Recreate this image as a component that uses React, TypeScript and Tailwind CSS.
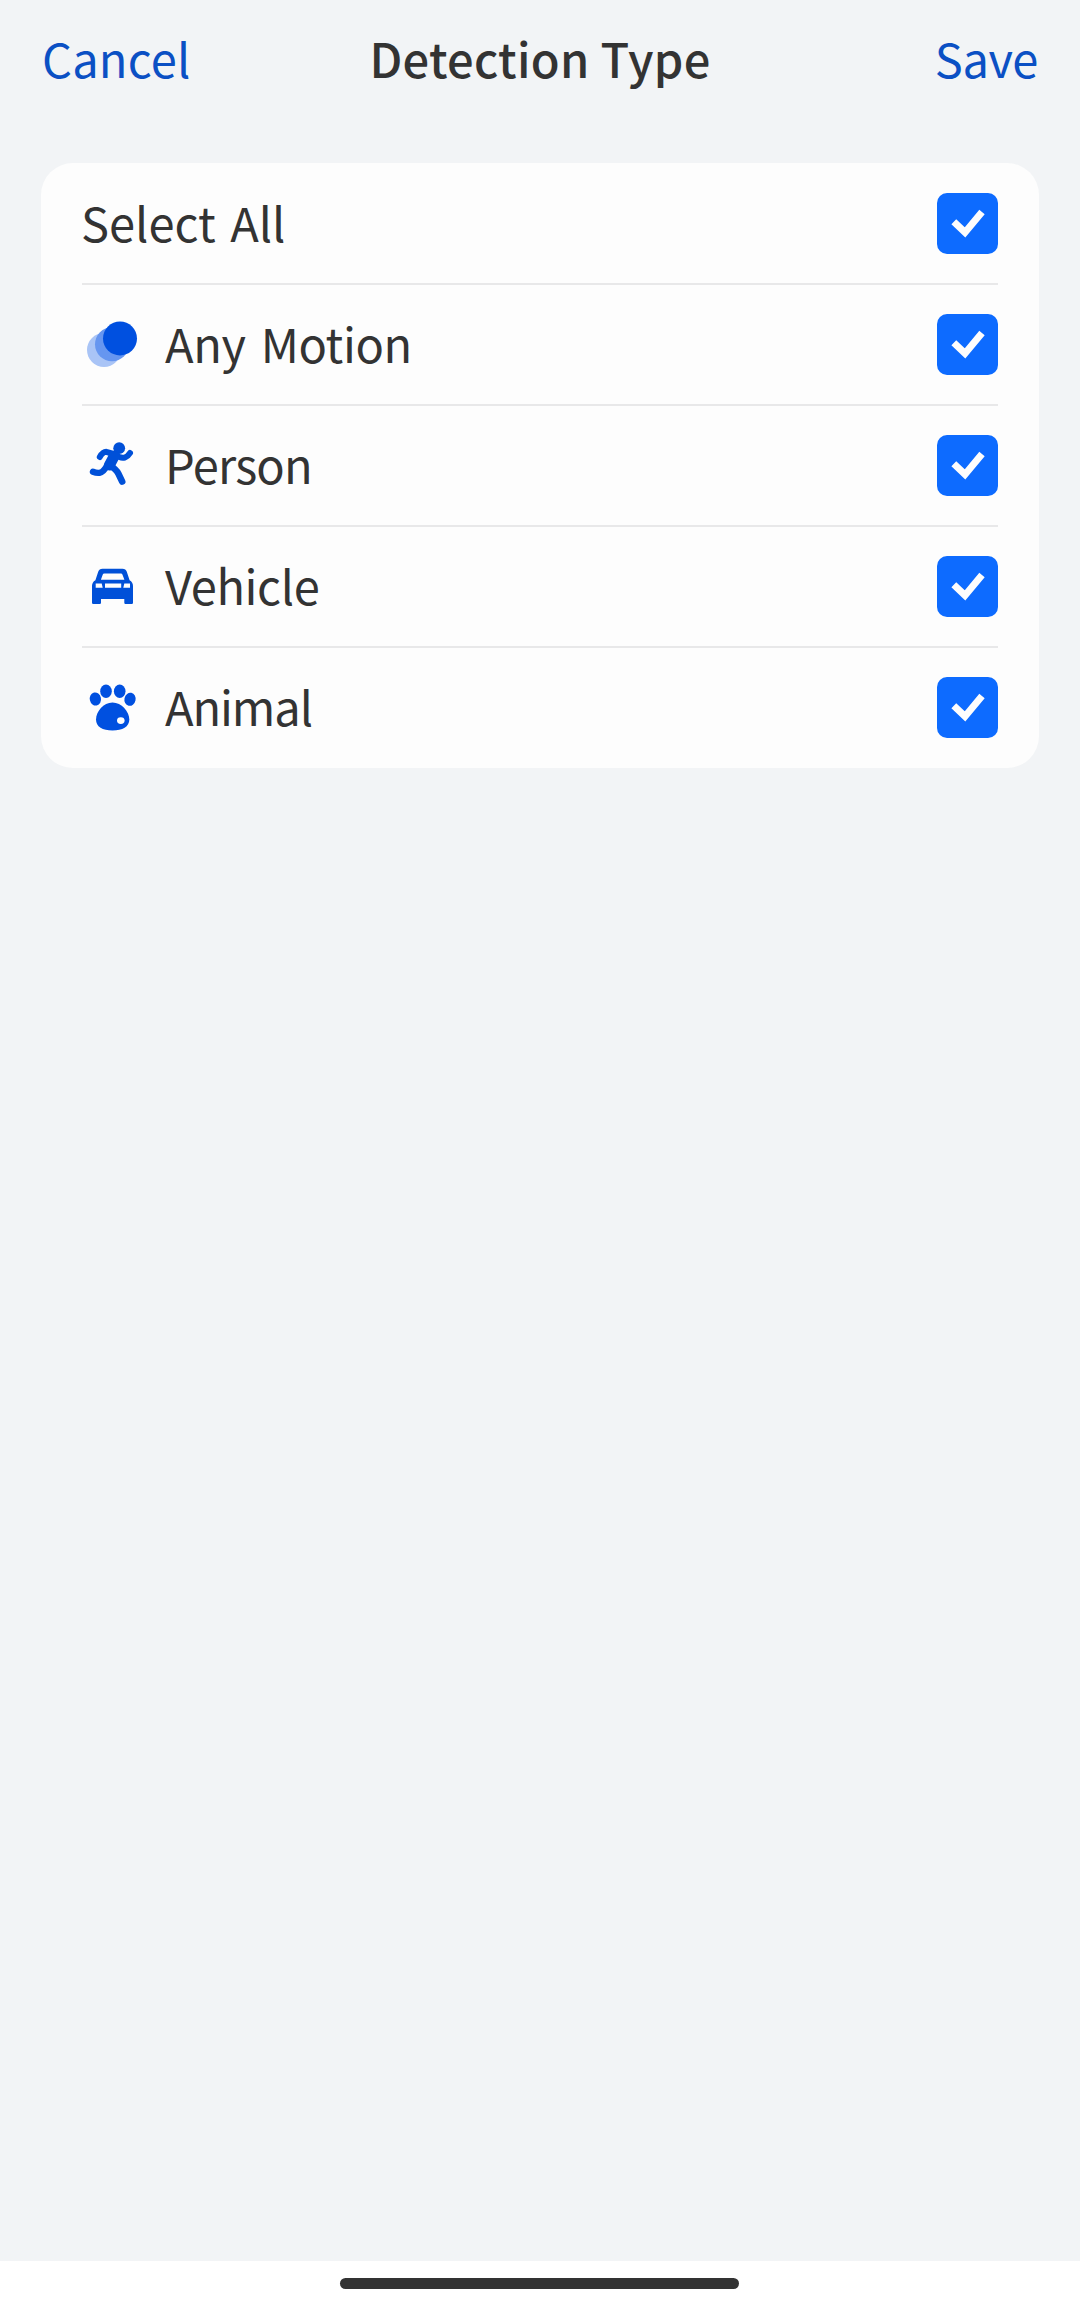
import type { ReactNode } from "react";

const CARD_TEXT = "relative -top-[2px] whitespace-nowrap text-[47px] leading-[60px]";

function MotionIcon() {
  return (
    <svg className="h-[60px] w-[60px]" viewBox="0 0 60 60">
      <circle cx="22" cy="36" r="17" fill="#a9c4f6" />
      <circle cx="30" cy="30.3" r="17" fill="#6696f0" />
      <circle cx="38" cy="24.4" r="17" fill="#0050e0" />
    </svg>
  );
}

function PersonIcon() {
  return (
    <svg className="h-[60px] w-[60px]" viewBox="0 0 60 60" fill="none" stroke="#0050d8" strokeLinecap="round" strokeLinejoin="round">
      <circle cx="37.2" cy="13.2" r="5.9" fill="#0050d8" stroke="none" />
      <path d="M17.8 22Q20.8 16.8 24.2 16.8L33.5 19.5Q38.6 23.8 42.6 22.6Q46 21.4 48 18" strokeWidth="6" />
      <path d="M32 21.5L27.5 30" strokeWidth="11" />
      <path d="M25.5 29.5Q22 37 17.5 37.8Q14.5 38.2 11 36.8" strokeWidth="6.4" />
      <path d="M28 30.5Q34.5 34.5 36.5 38.8L40.2 46.6" strokeWidth="6.6" />
    </svg>
  );
}

function VehicleIcon() {
  return (
    <svg className="h-[60px] w-[60px]" viewBox="0 0 60 60" fill="#0050d8">
      <path
        fillRule="evenodd"
        d="M20.5 12.7H40.5Q43.8 12.7 44.8 15.8L47.6 24.3Q51 26.3 51 30V46.8Q51 48 49.8 48H43.5Q42.3 48 42.3 46.8V43H19V46.8Q19 48 17.8 48H11.2Q10 48 10 46.8V30Q10 26.3 13.4 24.3L16.2 15.8Q17.2 12.7 20.5 12.7ZM22.3 17.5Q21.1 17.5 20.7 18.7L18.9 23.8H42.4L40.5 18.7Q40.1 17.5 38.9 17.5ZM13.7 27.6V31.7H20.7L19.7 27.6ZM23 27.6V31.7H39.2V27.6ZM42.3 27.6L41.3 31.7H48V27.6Z"
      />
    </svg>
  );
}

function AnimalIcon() {
  return (
    <svg className="h-[60px] w-[60px]" viewBox="0 0 60 60" fill="#0050e0">
      <ellipse cx="13.4" cy="22" rx="5.6" ry="6.6" transform="rotate(-12 13.4 22)" />
      <ellipse cx="24" cy="14.3" rx="5.8" ry="6.8" />
      <ellipse cx="37.7" cy="14.3" rx="5.8" ry="6.8" />
      <ellipse cx="48" cy="22.3" rx="5.6" ry="6.6" transform="rotate(12 48 22.3)" />
      <path d="M30.5 25.4C39.5 25.4 47.3 34.5 47.3 42.5C47.3 49.8 40.5 53.5 30.5 53.5C20.5 53.5 14 49.8 14 42.5C14 34.5 21.5 25.4 30.5 25.4Z" />
      <ellipse cx="38.8" cy="43.6" rx="3.8" ry="3.4" fill="#fdfdfd" />
    </svg>
  );
}

function Checkbox() {
  return (
    <span className="flex h-[61px] w-[61px] shrink-0 items-center justify-center rounded-[10px] bg-[#0d6bff]">
      <svg className="h-[61px] w-[61px]" viewBox="0 0 61 61" fill="none" stroke="#fdfdfd" strokeWidth="7">
        <path d="M16.8 28.8L28 39.4L45 19" />
      </svg>
    </span>
  );
}

type Row = { label: string; spacing: string; icon?: ReactNode };

const rows: Row[] = [
  { label: "Select All", spacing: "-left-px tracking-[0px] [word-spacing:4px]" },
  { label: "Any Motion", spacing: "tracking-[-0.4px] [word-spacing:5px]", icon: <MotionIcon /> },
  { label: "Person", spacing: "tracking-[-0.8px]", icon: <PersonIcon /> },
  { label: "Vehicle", spacing: "tracking-[-0.4px]", icon: <VehicleIcon /> },
  { label: "Animal", spacing: "tracking-[-1.1px]", icon: <AnimalIcon /> },
];

export default function App() {
  return (
    <div className="flex h-[2304px] w-[1080px] flex-col bg-[#f2f4f6] font-['Noto_Sans_CJK_SC',sans-serif] text-[#333333]">
      <header className="grid h-[120px] grid-cols-[1fr_auto_1fr] items-center px-[42px] pb-[5px] text-[47px] leading-[60px]">
        <button className="justify-self-start tracking-[0.2px] text-[#0b50c4]">Cancel</button>
        <h1 className="font-medium tracking-[0.3px]">Detection Type</h1>
        <button className="justify-self-end tracking-[-0.4px] text-[#0b50c4]">Save</button>
      </header>
      <main className="flex-1 px-[41px] pt-[43px]">
        <ul className="rounded-[32px] bg-[#fdfdfd] px-[41px] pt-px">
          {rows.map((row, i) => (
            <li
              key={row.label}
              className={
                i < rows.length - 1
                  ? "flex h-[121px] items-center border-b-2 border-[#e8e8e9]"
                  : "flex h-[120px] items-center pb-px"
              }
            >
              {row.icon && <span className="mr-[23px] shrink-0 pb-[2px]">{row.icon}</span>}
              <span className={`${CARD_TEXT} ${row.spacing}`}>{row.label}</span>
              <span className="ml-auto">
                <Checkbox />
              </span>
            </li>
          ))}
        </ul>
      </main>
      <footer className="flex h-[43px] items-start justify-center bg-white pt-[17px]">
        <div className="relative -left-px h-[11px] w-[399px] rounded-full bg-[#333333]" />
      </footer>
    </div>
  );
}
